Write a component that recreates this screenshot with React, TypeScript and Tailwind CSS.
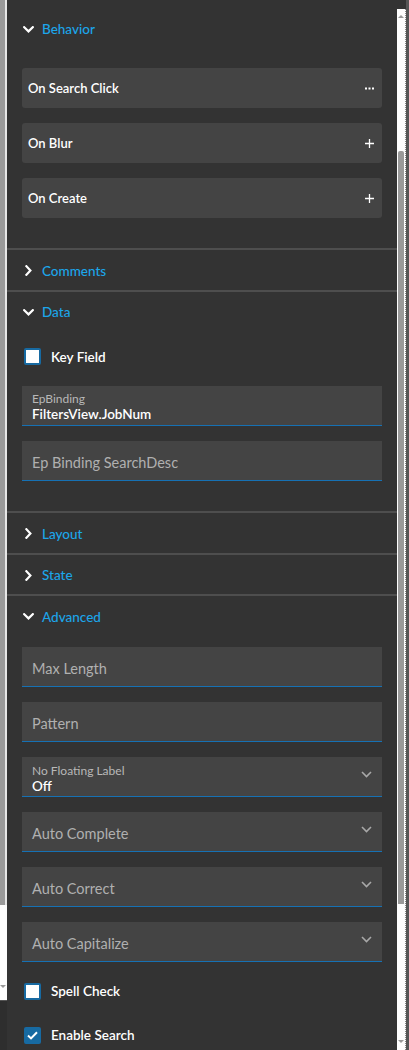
import React from "react";

const font = { fontFamily: "Lato, 'Noto Sans', sans-serif" };

function ChevronDown({ className = "" }: { className?: string }) {
  return (
    <svg width="11" height="7" viewBox="0 0 11 7" className={className}>
      <path d="M1.2 1.2 L5.5 5.4 L9.8 1.2" fill="none" stroke="currentColor" strokeWidth="2.2" strokeLinecap="square" />
    </svg>
  );
}

function ChevronRight() {
  return (
    <svg width="7" height="11" viewBox="0 0 7 11">
      <path d="M1.4 1.2 L5.4 5.5 L1.4 9.8" fill="none" stroke="currentColor" strokeWidth="2.2" strokeLinecap="square" />
    </svg>
  );
}

function SectionHeader({ title, open }: { title: string; open?: boolean }) {
  return (
    <div className="flex h-[40px] items-center pl-[16px] pt-[1px] text-white">
      <div className="flex w-[19px] items-center">
        {open ? <ChevronDown /> : <span className="pl-[2px]"><ChevronRight /></span>}
      </div>
      <span className="text-[13.5px] font-medium text-[#1ca6ea]">{title}</span>
    </div>
  );
}

function Divider() {
  return <div className="h-[2px] bg-[#4e4e4e]" />;
}

function ActionCard({ label, icon }: { label: string; icon: "dots" | "plus" }) {
  return (
    <div className="flex h-[40px] items-center justify-between rounded-[3px] bg-[#444444] pl-[6px] pr-[8px]">
      <span className="pt-[1px] text-[13px] font-semibold text-white">{label}</span>
      {icon === "dots" ? (
        <svg width="9" height="3" viewBox="0 0 9 3">
          <rect x="0" y="0.5" width="2" height="2" fill="#fff" />
          <rect x="3.5" y="0.5" width="2" height="2" fill="#fff" />
          <rect x="7" y="0.5" width="2" height="2" fill="#fff" />
        </svg>
      ) : (
        <svg width="9" height="9" viewBox="0 0 9 9">
          <path d="M4.5 0 V9 M0 4.5 H9" stroke="#fff" strokeWidth="1.3" />
        </svg>
      )}
    </div>
  );
}

function Field({ label, value, select }: { label: string; value?: string; select?: boolean }) {
  return (
    <div className="flex h-[40px] items-center justify-between border-b border-[#1671b4] bg-[#444444] pl-[10px] pr-[10px]">
      {value ? (
        <div className={`flex flex-col leading-none ${select ? "pt-[5px]" : "pt-[2px]"}`}>
          <span className="text-[12px] text-[#b8b8b8]">{label}</span>
          <span className="mt-[3px] text-[13.5px] font-semibold text-white">{value}</span>
        </div>
      ) : (
        <span className="pt-[4px] text-[14.5px] text-[#b0b0b0]">{label}</span>
      )}
      {select && (
        <svg width="11" height="7" viewBox="0 0 11 7" className="mb-[3px]">
          <path d="M1 1 L5.5 5.5 L10 1" fill="none" stroke="#a8a8a8" strokeWidth="1.6" />
        </svg>
      )}
    </div>
  );
}

function Check({ label, checked }: { label: string; checked?: boolean }) {
  return (
    <div className="flex h-[29px] items-center pl-[2px]">
      <div
        className={`flex h-[17px] w-[17px] items-center justify-center rounded-[2px] border-2 border-[#176aa2] ${
          checked ? "bg-[#176aa2]" : "bg-white"
        }`}
      >
        {checked && (
          <svg width="11" height="9" viewBox="0 0 11 9">
            <path d="M1 4.6 L4 7.4 L10 1.2" fill="none" stroke="#fff" strokeWidth="2" />
          </svg>
        )}
      </div>
      <span className="ml-[10px] text-[13.5px] font-semibold text-white">{label}</span>
    </div>
  );
}

export default function App() {
  return (
    <div className="flex h-[1050px] w-[409px] overflow-hidden bg-[#333333]" style={font}>
      {/* neighbouring panel's scrollbar */}
      <div className="flex w-[7px] flex-col">
        <div className="flex h-[905px]">
          <div className="w-[5px] bg-[#9a9a9a]" />
          <div className="w-[2px] bg-[#e6e6e6]" />
        </div>
        <div className="flex h-[95px] items-end justify-start bg-[#fdfdfd] pb-[12px]">
          <div className="h-0 w-0 border-x-[3px] border-t-[3px] border-x-transparent border-t-[#999]" />
        </div>
        <div className="flex-1 border-t border-[#555] bg-[#2e2e2e]" />
      </div>

      {/* property panel */}
      <div className="flex w-[390px] flex-col">
        <div className="h-[9px]" />
        <SectionHeader title="Behavior" open />
        <div className="flex flex-col gap-[15px] px-[15px] pb-[30px] pt-[20px]">
          <ActionCard label="On Search Click" icon="dots" />
          <ActionCard label="On Blur" icon="plus" />
          <ActionCard label="On Create" icon="plus" />
        </div>
        <Divider />
        <SectionHeader title="Comments" />
        <Divider />
        <SectionHeader title="Data" open />
        <div className="flex flex-col gap-[15px] px-[15px] pb-[30px] pt-[11px]">
          <Check label="Key Field" />
          <Field label="EpBinding" value="FiltersView.JobNum" />
          <Field label="Ep Binding SearchDesc" />
        </div>
        <Divider />
        <SectionHeader title="Layout" />
        <Divider />
        <SectionHeader title="State" />
        <Divider />
        <SectionHeader title="Advanced" open />
        <div className="flex flex-col gap-[15px] px-[15px] pt-[11px]">
          <Field label="Max Length" />
          <Field label="Pattern" />
          <Field label="No Floating Label" value="Off" select />
          <Field label="Auto Complete" select />
          <Field label="Auto Correct" select />
          <Field label="Auto Capitalize" select />
          <Check label="Spell Check" />
          <Check label="Enable Search" checked />
        </div>
      </div>

      {/* scrollbar */}
      <div className="flex w-[9px] flex-col">
        <div className="h-[9px] bg-[#333333]" />
        <div className="flex flex-1 flex-col items-center border-r border-dotted border-[#888] bg-[#fdfdfd]">
          <div className="mt-[6px] h-0 w-0 border-x-[3px] border-b-[3px] border-x-transparent border-b-[#999]" />
          <div className="mt-[133px] h-[753px] w-[6px] rounded-t-[2px] bg-[#999999]" />
          <div className="mt-auto mb-[7px] h-0 w-0 border-x-[3px] border-t-[3px] border-x-transparent border-t-[#999]" />
        </div>
      </div>
      <div className="w-[3px] bg-[#555555]" />
    </div>
  );
}
